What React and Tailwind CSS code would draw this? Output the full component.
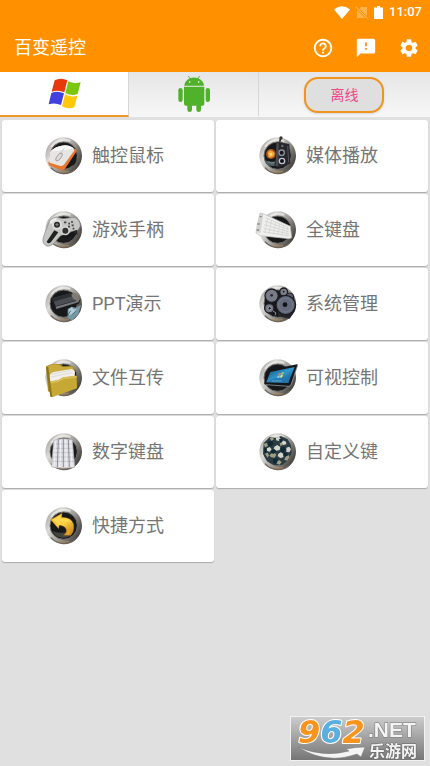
import { useState } from "react";
import { MdHelpOutline, MdFeedback, MdSettings } from "react-icons/md";

function Ring({ id, inner = "#16181a", children }) {
  return (
    <svg viewBox="0 0 114 114" className="w-[38px] h-[38px] flex-shrink-0 overflow-visible" aria-hidden="true">
      <defs>
        <linearGradient id={`${id}-rim`} x1="0" y1="0.2" x2="1" y2="0.8">
          <stop offset="0" stopColor="#a5a3a0" />
          <stop offset="0.25" stopColor="#dcdad7" />
          <stop offset="0.6" stopColor="#96948f" />
          <stop offset="1" stopColor="#34312e" />
        </linearGradient>
      </defs>
      <circle cx="56" cy="56" r="55" fill={`url(#${id}-rim)`} />
      <path d="M18 92A52 52 0 0 0 92 96" fill="none" stroke="#6b645c" strokeWidth="4" />
      <path d="M40 103q14 4 32 0" fill="none" stroke="#b8905a" strokeWidth="4" opacity="0.6" />
      <path d="M18 30A46 46 0 0 1 76 12" fill="none" stroke="#f0eeea" strokeWidth="6" opacity="0.7" />
      <circle cx="56" cy="56" r="41" fill={inner} stroke="#6e6b67" strokeWidth="3" />
      {children}
    </svg>
  );
}

function MouseIcon() {
  return (
    <Ring id="mouse">
      <path d="M90 36q7 1 4 8L60 95q-5 7-14 3L14 86q-5-3-4-11z" fill="#e8772c" />
      <path d="M50 26q22-4 36 8 4 3 1 8L58 82q-6 7-14 4L14 77q-4-8 2-35 14-13 34-16z" fill="#e6e5e4" />
      <path d="M50 26q20-4 35 7L58 40 18 42q14-13 32-16z" fill="#f7f7f6" />
      <path d="M58 34L47 48" stroke="#b9b7b5" strokeWidth="2" />
      <ellipse cx="42" cy="60" rx="6" ry="14" transform="rotate(35 42 60)" fill="#dbd9d7" stroke="#8d8985" strokeWidth="2" />
      <path d="M94 62L72 90l14-6q10-9 8-22z" fill="#1b1a19" />
    </Ring>
  );
}

function MediaIcon() {
  return (
    <Ring id="media">
      <circle cx="36" cy="51" r="15" fill="#a8541c" />
      <path d="M26 46q7-10 15-3 10 6 3 15-8 7-16 2z" fill="#eda33b" />
      <path d="M31 48l8-1 2 7-8 3z" fill="#ffd875" />
      <path d="M19 70q17 8 34 2v13q-20 6-32-5z" fill="#4f6265" />
      <path d="M26 74l12 4 12-3" stroke="#8fa3a2" strokeWidth="2" fill="none" />
      <path d="M53 14l38 7 3 59-38 12-9-10z" fill="#26272c" />
      <path d="M53 14l6 6-1 66-8 2z" fill="#4b4c51" />
      <path d="M62 14l3-10" fill="none" stroke="#242424" strokeWidth="5" />
      <circle cx="66" cy="3" r="5" fill="#3a3530" />
      <circle cx="70" cy="27" r="4" fill="#666871" />
      <circle cx="68" cy="47" r="8" fill="#15161a" stroke="#8f919e" strokeWidth="4" />
      <circle cx="69" cy="72" r="8" fill="#101116" stroke="#c2c4d2" strokeWidth="4" />
      <path d="M86 26l3 50" stroke="#54565e" strokeWidth="3" />
    </Ring>
  );
}

function GamepadIcon() {
  return (
    <Ring id="gamepad">
      <path d="M-2 100q-8-8-1-27l13-34q6-18 24-21l20 5 34-4q17 6 18 26l-7 12-17 4-35 13-22 24q-16 14-27 2z" fill="#c5c5c3" stroke="#858583" strokeWidth="2" />
      <path d="M5 92l23-34 12 6-22 29q-8 8-13-1z" fill="#202121" />
      <path d="M14 32q8-12 22-11l-5 11q-8 1-14 8z" fill="#eeeeec" />
      <circle cx="36" cy="41" r="15" fill="#deded9" />
      <circle cx="36" cy="41" r="9" fill="#252728" />
      <circle cx="61" cy="59" r="14" fill="#d5d5d1" />
      <circle cx="61" cy="59" r="9" fill="#303132" />
      <path d="M31 41h10M36 36v10" stroke="#888" strokeWidth="3" />
      <path d="M57 34h7M70 38h5M78 33h6M80 43h6M69 47h6M83 53h5" stroke="#444646" strokeWidth="5" />
      <path d="M86 61l10-4 2 14-9-3z" fill="#262626" />
      <path d="M44 82q18 12 40-5" stroke="#1c1d1e" strokeWidth="9" fill="none" />
    </Ring>
  );
}

function KeyboardIcon() {
  return (
    <Ring id="keyboard">
      <path d="M3 6l10 2 81 38 4 34-8 3-87-9-12-8 4-26z" fill="#efefee" stroke="#bcbcbb" strokeWidth="2" />
      <path d="M3 6l10 4-9 56-13-3z" fill="#d2d2d1" />
      <path d="M-5 39h7M-7 57h7M2 17h6" stroke="#888" strokeWidth="4" />
      <path d="M20 20l68 30M18 30l72 26M16 41l75 22M14 52l77 17M12 62l79 13" stroke="#cacac9" strokeWidth="2" />
      <path d="M26 22l-9 44M38 27l-8 40M50 33l-7 37M62 38l-6 34M74 43l-5 31M86 48l-4 28" stroke="#d2d2d0" strokeWidth="2" />
    </Ring>
  );
}

function SlidesIcon() {
  return (
    <Ring id="slides">
      <path d="M17 40L78 21l29 23-6 14-71 13z" fill="#1b1d1f" />
      <path d="M22 40l55-15 22 19-67 20z" fill="#4b4f53" />
      <path d="M22 40l55-15 8 8-59 17z" fill="#2c3033" />
      <path d="M32 65l68-19v6L34 72z" fill="#74797c" />
      <path d="M79 29q8-10 14-2l12 16-5 9-17-13z" fill="#817a70" />
      <path d="M68 72l12-7 12 3 16-8-8 28-19 18-13-7z" fill="#7799a4" />
      <path d="M72 73l8-6 7 7 8-4-8 14-14 7-3-8z" fill="#b4ced5" />
      <path d="M69 90l8-13M82 88l10-9" stroke="#456979" strokeWidth="3" />
    </Ring>
  );
}

function GearsIcon() {
  return (
    <Ring id="gears">
      <path d="M65 27l47 30-4 21L92 101 56 94z" fill="#25252b" />
      <g stroke="#1c1d23">
        <circle cx="38" cy="32" r="20" fill="#777b88" strokeWidth="4" />
        <circle cx="74" cy="21" r="12" fill="#777b87" strokeWidth="4" />
        <circle cx="92" cy="36" r="12" fill="#5c606e" strokeWidth="3" />
        <circle cx="31" cy="70" r="14" fill="#737682" strokeWidth="4" />
        <circle cx="80" cy="60" r="29" fill="#656a7b" strokeWidth="4" />
      </g>
      <circle cx="80" cy="60" r="21" fill="none" stroke="#7d8192" strokeWidth="2" />
      <circle cx="78" cy="59" r="7" fill="#111217" />
      <circle cx="32" cy="70" r="5" fill="#17181d" stroke="#a4a7b0" strokeWidth="3" />
      <circle cx="38" cy="31" r="4" fill="#24252a" />
      <circle cx="74" cy="20" r="4" fill="#16171c" stroke="#a2a5b0" strokeWidth="2" />
      <path d="M42 78l9 6-3 7" stroke="#8b8f9a" strokeWidth="3" fill="none" />
    </Ring>
  );
}

function FolderIcon() {
  return (
    <Ring id="folder">
      <path d="M3 22q18-12 44-6l7 6 27-1q7 2 8 12l4 42-74 26L9 97z" fill="#a98b22" />
      <path d="M7 21q16-8 36-3l8 6 32-1 4 16-74 14z" fill="#c9aa3c" />
      <path d="M13 56q1-14 13-17l53-9q9 1 11 9l-4 30-66 17z" fill="#f0efeb" />
      <path d="M20 46l58-12M18 54l62-13" stroke="#d4d2cc" strokeWidth="2" />
      <path d="M12 68l28-5 15-8 40-5 1 38-73 26q-5 1-6-5z" fill="#c6a835" />
      <path d="M12 68l28-5 15-8 40-5v6l-39 5-16 8-26 5z" fill="#d8bd57" />
      <path d="M3 25l13 88 6 2L10 25z" fill="#8e741c" />
    </Ring>
  );
}

function TabletIcon() {
  return (
    <Ring id="tablet">
      <defs>
        <linearGradient id="tablet-screen" x1="0" y1="0" x2="1" y2="1">
          <stop offset="0" stopColor="#0d4774" />
          <stop offset="0.5" stopColor="#3298cb" />
          <stop offset="1" stopColor="#0a4275" />
        </linearGradient>
      </defs>
      <path d="M32 33l82-17q3 0 2 4L96 78q-2 4-7 4l-70-5q-5-1-3-6l12-33q1-4 4-5z" fill="#14181c" />
      <path d="M34 39l73-15-19 48-66-2z" fill="url(#tablet-screen)" />
      <path d="M116 18L96 78l-6 4-70-5" fill="none" stroke="#a9aeb0" strokeWidth="2" />
      <path d="M24 68q28-18 68-11l-4 15z" fill="#2478b1" opacity="0.8" />
      <path d="M59 44l7-2-2 6-7 2z" fill="#ef805d" />
      <path d="M68 41l7-2-3 7-6 1z" fill="#a8d765" />
      <path d="M56 52l7-2-2 6-7 1z" fill="#8ed3ef" />
      <path d="M65 49l7-1-3 7-6 1z" fill="#ffe07a" />
      <path d="M38 66h30" stroke="#a5d8ed" strokeWidth="2" opacity="0.7" />
    </Ring>
  );
}

function NumpadIcon() {
  return (
    <Ring id="numpad">
      <path d="M26 22q28-9 56-1l7 82q-34 5-69-1z" fill="#e0e0e5" stroke="#b5b5ba" strokeWidth="2" />
      <path d="M29 33h53M28 46h55M26 59h59M25 72h61M24 85h63" stroke="#a9aab3" strokeWidth="2" />
      <path d="M40 20l-3 82M55 18v85M70 20l3 82" stroke="#8d8f99" strokeWidth="3" />
      <path d="M32 23l-4 78M47 19l-2 83M62 19l2 83M77 22l4 80" stroke="#f4f4f8" strokeWidth="3" opacity="0.8" />
    </Ring>
  );
}

function CustomIcon() {
  return (
    <Ring id="custom" inner="#3a4242">
      <path d="M14 30l18-18 20 3 14-6 20 10 10 18 2 22-10 22-18 14-24 2-22-12-12-22z" fill="#2b3c42" />
      <g fill="#d6d5cd">
        <path d="M51 14l9-3 5 6-5 7-9-2zM71 22l10 4 1 8-10 2-5-7zM46 41l9-5 9 6-2 9-10 2-8-5zM24 46l8-4 6 7-6 7-9-3zM82 44l9-3 5 8-5 9-9-1zM58 62l8-4 8 6-1 9-9 2-8-6z" />
      </g>
      <g fill="#a19e86">
        <path d="M14 32l10-2 3 9-9 4zM32 15l9-3 4 7-8 5zM36 62l10-4 6 7-5 9-10-1-6-5zM80 70l8-4 4 6-7 11-9-2zM54 84l8-2 6 6-7 7-10-4zM18 62l8-3 4 8-4 7zM62 28l7 1 3 7-8 3z" />
      </g>
      <g fill="#102a35">
        <path d="M28 25l11-2 5 9-9 9-9-5zM60 18l9-1 3 7-8 6zM66 42l12 1 2 9-9 8-7-7zM38 50l9-1 5 7-8 7-8-4zM76 58l8 1 3 8-10 5-5-6zM42 79l10-4 5 7-5 10-10-1zM14 44l8 2 2 12-8 2z" />
      </g>
    </Ring>
  );
}

function ShortcutIcon() {
  return (
    <Ring id="shortcut">
      <defs>
        <linearGradient id="shortcut-arrow" x1="0" y1="0" x2="1" y2="1">
          <stop offset="0" stopColor="#f1b31c" />
          <stop offset="0.5" stopColor="#ffd344" />
          <stop offset="1" stopColor="#b97916" />
        </linearGradient>
      </defs>
      <path d="M23 72q32 14 61-7l-5 20q-24 17-49-1z" fill="#44443f" />
      <path d="M17 38l34-19-1 12q30 0 36 21 3 22-9 33H56q12-11 7-20-5-9-21-10l-1 10z" fill="url(#shortcut-arrow)" stroke="#a87413" strokeWidth="1" />
      <path d="M23 38l23-13v10q24-1 33 13-15-8-35-4v9z" fill="#ffe263" opacity="0.6" />
      <path d="M64 60q16 6 8 24h-8q8-10 0-24z" fill="#ef9c28" />
    </Ring>
  );
}

function WindowsLogo() {
  return (
    <svg viewBox="0 0 99 93" className="w-[33px] h-[31px]" aria-hidden="true">
      <path d="M20 7q18-9 38 0l-9 36q-18-8-38-2z" fill="#e8380d" />
      <path d="M61 10q17 9 37 3l-9 35q-18 8-37-3z" fill="#7ac70c" />
      <path d="M10 45q18-8 38 1l-9 35q-18-8-37-2z" fill="#4340e0" />
      <path d="M51 49q17 10 37 4l-9 35q-19 7-37-3z" fill="#ffc80a" />
    </svg>
  );
}

function AndroidLogo() {
  return (
    <svg viewBox="0 0 96 108" className="w-8 h-9" fill="#50b12b" aria-hidden="true">
      <path d="M19 29q1-14 16-22L29 0l2-1 6 7q11-3 22 0l6-7 2 1-6 7q16 8 17 22z" />
      <path d="M18 32h61v51q0 6-6 6h-4v12q0 7-7 7t-7-7V89H42v12q0 7-7 7t-7-7V89h-4q-6 0-6-6z" />
      <rect x="1" y="36" width="13" height="42" rx="6.5" />
      <rect x="83" y="36" width="13" height="42" rx="6.5" />
      <circle cx="35" cy="18" r="2.5" fill="#fff" />
      <circle cx="62" cy="18" r="2.5" fill="#fff" />
    </svg>
  );
}

function StatusBar() {
  return (
    <div className="flex h-6 items-center justify-end pr-2 text-white">
      <svg viewBox="0 0 16 13" className="w-4 h-[13px]" fill="currentColor" aria-hidden="true">
        <path d="M0 3.4Q8-2.8 16 3.4L8 13z" />
      </svg>
      <svg viewBox="0 0 12 13" className="ml-1.5 w-3 h-[13px]" aria-hidden="true">
        <path d="M1 5l4-4h6v11H1z" fill="#fff" opacity="0.3" />
        <path d="M0 1l12 12" stroke="#ff9100" strokeWidth="2.5" />
        <path d="M0 1l11.5 11.5" stroke="#fff" strokeWidth="1" opacity="0.4" />
      </svg>
      <svg viewBox="0 0 9 13" className="ml-1.5 w-[9px] h-[13px]" fill="currentColor" aria-hidden="true">
        <path d="M3 0h3v1.5h3V13H0V1.5h3z" />
      </svg>
      <span className="ml-1.5 text-[13px] leading-4 font-medium">11:07</span>
    </div>
  );
}

function SiteBadge() {
  return (
    <svg viewBox="0 0 135 45" className="fixed right-[5px] bottom-[5px] w-[135px] h-[45px] overflow-visible" role="img" aria-label="962.NET 乐游网">
      <defs>
        <linearGradient id="badge-bg" x1="0" y1="0" x2="0" y2="1">
          <stop offset="0" stopColor="#cdcdcd" />
          <stop offset="1" stopColor="#757575" />
        </linearGradient>
      </defs>
      <rect x="0.5" y="0.5" width="134" height="44" fill="url(#badge-bg)" stroke="#f2f2f2" />
      <path d="M8 31q26 11 51 4l-3-2q10-2 19-2l-4 10-4-3Q36 49 8 31z" fill="#f4f4f4" stroke="#777" strokeWidth="0.5" />
      <text x="8" y="27" fontFamily="DejaVu Sans" fontWeight="bold" fontStyle="italic" fontSize="32" stroke="#fff" strokeWidth="2" strokeLinejoin="round" paintOrder="stroke">
        <tspan fill="#f7941d">9</tspan>
        <tspan fill="#5aaee0">6</tspan>
        <tspan fill="#f7941d">2</tspan>
      </text>
      <text x="78" y="21" fontFamily="Liberation Sans" fontWeight="bold" fontSize="21" fill="#f4f4f4" stroke="#777" strokeWidth="1" paintOrder="stroke">.NET</text>
      <text x="79" y="41" fontFamily="Noto Sans CJK SC" fontWeight="bold" fontSize="16" fill="#f4f4f4" stroke="#666" strokeWidth="1" paintOrder="stroke">乐游网</text>
    </svg>
  );
}

const ACTIONS = [
  { label: "帮助", icon: MdHelpOutline },
  { label: "反馈", icon: MdFeedback },
  { label: "设置", icon: MdSettings },
];

const FEATURES = [
  { label: "触控鼠标", icon: MouseIcon },
  { label: "媒体播放", icon: MediaIcon },
  { label: "游戏手柄", icon: GamepadIcon },
  { label: "全键盘", icon: KeyboardIcon },
  { label: "PPT演示", icon: SlidesIcon },
  { label: "系统管理", icon: GearsIcon },
  { label: "文件互传", icon: FolderIcon },
  { label: "可视控制", icon: TabletIcon },
  { label: "数字键盘", icon: NumpadIcon },
  { label: "自定义键", icon: CustomIcon },
  { label: "快捷方式", icon: ShortcutIcon },
];

const TABS = [
  { id: "windows", label: "Windows", logo: WindowsLogo },
  { id: "android", label: "Android", logo: AndroidLogo },
];

export default function App() {
  const [tab, setTab] = useState("windows");

  return (
    <div className="min-h-screen bg-[#e0e0e0] font-['Roboto','Noto_Sans_CJK_SC',sans-serif]">
      <header className="bg-[#ff9100]">
        <StatusBar />
        <div className="flex h-12 items-center justify-between pl-3.5 pr-2.5">
          <h1 className="text-lg text-white">百变遥控</h1>
          <div className="flex gap-[21px]">
            {ACTIONS.map(({ label, icon: Icon }) => (
              <button key={label} type="button" aria-label={label} className="text-white">
                <Icon className="w-[22px] h-[22px]" aria-hidden />
              </button>
            ))}
          </div>
        </div>
      </header>

      <nav className="flex h-[45px] bg-linear-to-b from-[#e6e6e6] to-[#f7f7f7]">
        {TABS.map(({ id, label, logo: Logo }) => (
          <button
            key={id}
            type="button"
            aria-label={label}
            aria-pressed={tab === id}
            onClick={() => setTab(id)}
            className={`flex flex-3 items-center justify-center border-r border-r-[#d6d6d6] border-b-2 ${
              tab === id ? "bg-white border-b-[#f09a2c]" : "border-b-transparent"
            }`}
          >
            <Logo />
          </button>
        ))}
        <div className="flex flex-4 items-center justify-center">
          <button
            type="button"
            className="h-9 w-20 rounded-[14px] border-2 border-[#f0941e] bg-[#dfdfdf] text-sm text-[#f2478a] shadow-sm"
          >
            离线
          </button>
        </div>
      </nav>

      <main className="grid grid-cols-2 gap-0.5 px-0.5 pt-[3px]">
        {FEATURES.map(({ label, icon: Icon }) => (
          <button
            key={label}
            type="button"
            className="flex h-[72px] items-center gap-[9px] rounded-[3px] bg-white pl-[43px] text-lg text-[#757575] shadow-[0_1px_1px_#aaaaaa]"
          >
            <Icon />
            {label}
          </button>
        ))}
      </main>

      <SiteBadge />
    </div>
  );
}
